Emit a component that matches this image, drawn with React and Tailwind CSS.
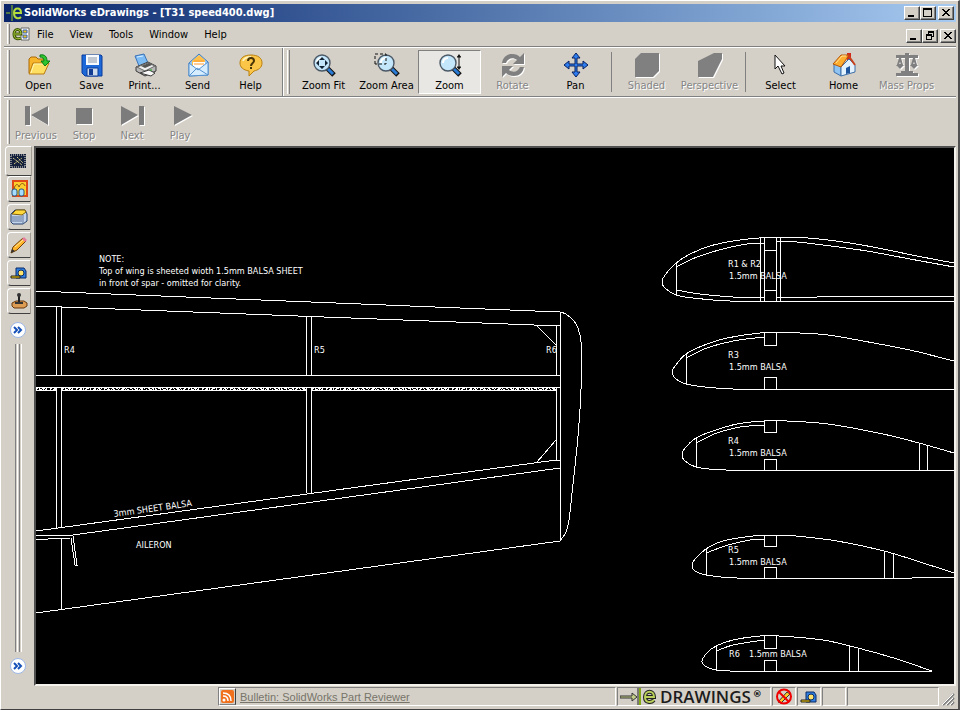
import clsx from 'clsx'

const MENUS = ['File', 'View', 'Tools', 'Window', 'Help']

/* ---------- Toolbar icons ---------- */

function OpenIcon() {
    return (
        <svg width="24" height="24" viewBox="0 0 24 24">
            <path d="M2 20V6l2-2h5l2 2h7v4" fill="#f7b52c" stroke="#a86a08" />
            <path d="M2 21 6 10h16l-5 11z" fill="#ffdf62" stroke="#b87a10" />
            <path d="M4 20 7 11h13" fill="none" stroke="#fff5b0" />
            <path d="M13 2c5-1 7 2 7 6h3l-5 5-4-5h3c0-3-2-4-4-4z" fill="#2fc52f" stroke="#0a7a14" />
        </svg>
    )
}

function SaveIcon() {
    return (
        <svg width="24" height="24" viewBox="0 0 24 24">
            <path d="M2 2h19l1 1v20H5l-3-3z" fill="#1d68d8" stroke="#0b3a9a" />
            <path d="M6 2h13v10H6z" fill="#f7fafd" />
            <path d="M8 5h9M8 7h9M8 9h9" stroke="#8a94a4" />
            <path d="M7 15h11v8H7z" fill="#cfdcec" stroke="#0b3a9a" />
            <path d="M9 16h4v6H9z" fill="#123c94" />
        </svg>
    )
}

function PrintIcon() {
    return (
        <svg width="24" height="24" viewBox="0 0 24 24">
            <path d="M2 3 11 1l4 9-9 3z" fill="#7dbbf5" stroke="#3a72b8" />
            <path d="m4 4 6-1" stroke="#d8efff" />
            <path d="m3 14 12-5 8 4v5l-11 5-9-5z" fill="#b8b8b8" stroke="#3c3c3c" />
            <path d="m4 14 8 4 10-5-7-3z" fill="#efefef" stroke="#6a6a6a" />
            <path d="m8 13 8-3 3 2-7 3z" fill="#555" />
            <path d="m7 20 11 3 4-3-6-3z" fill="#f8f8f8" stroke="#3c3c3c" />
            <path d="M17 17h2" stroke="#22b422" />
        </svg>
    )
}

function SendIcon() {
    return (
        <svg width="24" height="24" viewBox="0 0 24 24">
            <path d="M3 10 13 1l9 8v13L3 23z" fill="#9dc9f3" stroke="#3b7cc0" />
            <path d="m6 8 7-6 6 5v7l-7 3-6-3z" fill="#ffc04a" />
            <path d="M7 9h12v5l-6 3-6-3z" fill="#fff" />
            <path d="M8 8h10M8 11h10" stroke="#ff9a2c" />
            <path d="m3 10 9 7 10-8v13L3 23z" fill="#d6ecff" stroke="#5592d0" />
            <path d="m3 23 8-8 11 7" fill="none" stroke="#5592d0" />
        </svg>
    )
}

function HelpIcon() {
    return (
        <svg width="24" height="24" viewBox="0 0 24 24">
            <path d="M12 2c7 0 11 3 11 8s-4 7-8 8l-5 5v-5c-6-1-9-4-9-8 0-5 4-8 11-8z" fill="#fbc548" stroke="#b9800f" />
            <path d="M4 8c1-3 5-4 8-4" fill="none" stroke="#fff2bb" strokeWidth="2" />
            <path d="M9 8c0-4 6-4 6 0 0 2-3 2-3 5M12 14v2" fill="none" stroke="#493405" strokeWidth="2" />
        </svg>
    )
}

function Magnifier() {
    return (
        <>
            <path d="m15 15 7 7" stroke="#111" strokeWidth="5" />
            <path d="m16 16 5 5" stroke="#2a7bd6" strokeWidth="3" />
            <circle cx="10" cy="10" r="8" fill="#c3e6fb" stroke="#4b5866" strokeWidth="1.4" />
            <path d="M5 10c0-3 2-5 5-5" fill="none" stroke="#fff" strokeWidth="2" />
        </>
    )
}

function ZoomFitIcon() {
    return (
        <svg width="24" height="24" viewBox="0 0 24 24">
            <Magnifier />
            <path d="m10 4 3 3H7zM10 16l3-3H7zM4 10l3-3v6zM16 10l-3-3v6z" fill="#123" />
        </svg>
    )
}

function ZoomAreaIcon() {
    return (
        <svg width="26" height="24" viewBox="-2 0 26 24">
            <Magnifier />
            <path d="M-1 11V1h11v10z" fill="none" stroke="#111" strokeDasharray="3 2" />
        </svg>
    )
}

function ZoomIcon() {
    return (
        <svg width="24" height="24" viewBox="0 0 24 24">
            <Magnifier />
            <path d="M21 3v12M19 4h4M19 14h4" stroke="#111" />
            <path d="m21 1 2 3h-4zM21 17l2-3h-4z" fill="#111" />
        </svg>
    )
}

function RotateIcon() {
    return (
        <svg width="24" height="24" viewBox="0 0 24 24" className="drop-shadow-[1px_1px_0_white]">
            <path d="M1 10c1-6 5-9 10-9 4 0 6 1 8 3l4-4v11H12l4-4c-4-3-9-2-11 3zM23 14c-1 6-5 9-10 9-4 0-6-1-8-3l-4 4V13h11l-4 4c4 3 9 2 11-3z" fill="#808080" />
        </svg>
    )
}

function PanIcon() {
    return (
        <svg width="24" height="24" viewBox="0 0 24 24">
            <path
                d="m12 0 4 5h-3v6h6V8l5 4-5 4v-3h-6v6h3l-4 5-4-5h3v-6H5v3l-5-4 5-4v3h6V5H8z"
                fill="#2d7cf0"
                stroke="#08205e"
            />
        </svg>
    )
}

function ShadedIcon() {
    return (
        <svg width="26" height="25" viewBox="0 0 26 25" className="drop-shadow-[1px_1px_0_white]">
            <path d="M1 6 7 0h18v18l-6 6H1z" fill="#808080" />
        </svg>
    )
}

function PerspectiveIcon() {
    return (
        <svg width="26" height="25" viewBox="0 0 26 25" className="drop-shadow-[1px_1px_0_white]">
            <path d="M1 8 17 0h8v6l-9 18H1z" fill="#808080" />
        </svg>
    )
}

function SelectIcon() {
    return (
        <svg width="24" height="24" viewBox="0 0 24 24">
            <path d="M6 2v14l3-3 4 8 2-1-3-7h4z" fill="#fff" stroke="#111" />
        </svg>
    )
}

function HomeIcon() {
    return (
        <svg width="24" height="24" viewBox="0 0 24 24">
            <path d="M15 0h4v8h-4z" fill="#d42a1c" />
            <path d="M2 11v8l7 4V10z" fill="#8fc4f2" stroke="#3c6ea8" />
            <path d="m9 14 8-8 6 6v7L9 23z" fill="#e2f2ff" stroke="#3c6ea8" />
            <path d="m14 15 4-2v7l-4 1z" fill="#1e559c" />
            <path d="M1 11 9 2h8l-8 12z" fill="#ffad2e" stroke="#b3560c" />
            <path d="m4 10 6-7h4" fill="none" stroke="#ffe39a" />
            <path d="m16 2 7 10" stroke="#c8421c" strokeWidth="2" />
        </svg>
    )
}

function MassIcon() {
    return (
        <svg width="24" height="24" viewBox="0 0 24 24" className="drop-shadow-[1px_1px_0_white]">
            <path d="M1 2h22v3H1zM10 0h4v19h-4zM6 18h12v2H6zM1 20h22v3H1z" fill="#808080" />
            <path d="M5 5 3 12h4zM19 5l-2 7h4z" fill="none" stroke="#808080" strokeWidth="2" />
            <path d="M1 12h8l-4 4zM15 12h8l-4 4z" fill="#808080" />
        </svg>
    )
}

function PlayShape({ d }) {
    return (
        <svg width="24" height="20" viewBox="0 0 24 20" className="drop-shadow-[1px_1px_0_white]">
            <path d={d} fill="#7c7c7c" />
        </svg>
    )
}

const FILE_TOOLS = [
    { label: 'Open', icon: <OpenIcon /> },
    { label: 'Save', icon: <SaveIcon /> },
    { label: 'Print...', icon: <PrintIcon /> },
    { label: 'Send', icon: <SendIcon /> },
    { label: 'Help', icon: <HelpIcon /> },
]

const VIEW_TOOLS = [
    { label: 'Zoom Fit', icon: <ZoomFitIcon /> },
    { label: 'Zoom Area', icon: <ZoomAreaIcon /> },
    { label: 'Zoom', icon: <ZoomIcon />, pressed: true },
    { label: 'Rotate', icon: <RotateIcon />, disabled: true },
    { label: 'Pan', icon: <PanIcon /> },
    { separator: true },
    { label: 'Shaded', icon: <ShadedIcon />, disabled: true },
    { label: 'Perspective', icon: <PerspectiveIcon />, disabled: true },
    { separator: true },
    { label: 'Select', icon: <SelectIcon /> },
    { label: 'Home', icon: <HomeIcon /> },
    { label: 'Mass Props', icon: <MassIcon />, disabled: true },
]

const PLAY_TOOLS = [
    { label: 'Previous', icon: <PlayShape d="M1 0h5v19H1zM7 9 24 0v19z" /> },
    { label: 'Stop', icon: <PlayShape d="M4 2h16v16H4z" /> },
    { label: 'Next', icon: <PlayShape d="M1 0l17 9-17 10zM19 0h5v19h-5z" /> },
    { label: 'Play', icon: <PlayShape d="M6 0l18 9-18 10z" /> },
]

/* ---------- Window chrome ---------- */

function Grip() {
    return <div className="mr-0.5 w-[3px] shrink-0 self-stretch border-l border-white border-r border-r-[#808080]" />
}

function WindowButton({ label, d, className }) {
    return (
        <button
            type="button"
            aria-label={label}
            className={clsx(
                'flex h-[14px] w-4 items-center justify-center border border-t-white border-l-white border-r-[#404040] border-b-[#404040] bg-[#d4d0c8] shadow-[inset_-1px_-1px_0_#808080]',
                className
            )}
        >
            <svg width="12" height="10" viewBox="0 0 12 10" shapeRendering="crispEdges">
                <path d={d} fill="#000" />
            </svg>
        </button>
    )
}

const MINIMIZE = 'M2 7h6v2H2z'
const MAXIMIZE = 'M1 0h9v9H1zM2 2v6h7V2z'
const RESTORE = 'M4 0h6v6H8V5h1V2H5v1H4zM2 3h6v6H2zM3 5v3h4V5z'
const CLOSE = 'M2 1h2v1h1v1h2V2h1V1h2v1H9v1H8v1H7v1h1v1h1v1h1v1H8V7H7V6H5v1H4v1H2V7h1V6h1V5h1V4H4V3H3V2H2z'

function WindowButtons({ middle, middleLabel }) {
    return (
        <div className="flex">
            <WindowButton label="Minimize" d={MINIMIZE} />
            <WindowButton label={middleLabel} d={middle} />
            <WindowButton label="Close" d={CLOSE} className="ml-0.5" />
        </div>
    )
}

function ToolButton({ tool }) {
    return (
        <button
            type="button"
            disabled={tool.disabled}
            aria-pressed={tool.pressed}
            className={clsx(
                'flex h-11 w-full flex-col items-center border pt-0.5 leading-3 whitespace-nowrap',
                tool.pressed ? 'border-[#808080] border-r-white border-b-white bg-[#e9e7e3]' : 'border-transparent',
                tool.disabled && 'text-[#858585] [text-shadow:1px_1px_0_white]'
            )}
        >
            <span className="flex h-[27px] items-start justify-center">{tool.icon}</span>
            {tool.label}
        </button>
    )
}

function SideTab({ label, active, children }) {
    return (
        <button
            type="button"
            aria-label={label}
            className={clsx(
                'flex items-center justify-center rounded-l-sm border border-t-white border-l-white border-r-[#a09c94] border-b-[#404040]',
                active ? 'ml-px h-[30px] w-[27px]' : 'mb-0.5 ml-[3px] h-[26px] w-6'
            )}
        >
            <svg width="18" height="18" viewBox="0 0 18 18">{children}</svg>
        </button>
    )
}

function Chevron({ label }) {
    return (
        <button type="button" aria-label={label} className="mx-auto flex size-4 items-center justify-center rounded-full border border-[#9db8e8] bg-white">
            <svg width="12" height="12" viewBox="0 0 12 12" className="shrink-0">
                <path d="m2 3 3 3-3 3M6 3l3 3-3 3" fill="none" stroke="#1550b8" strokeWidth="2" />
            </svg>
        </button>
    )
}

function TapeIcon() {
    return (
        <>
            <path d="M6 4h8l2 3v7H6z" fill="#2f7fe0" stroke="#0b2a66" />
            <circle cx="11" cy="9" r="3" fill="#ffe26a" stroke="#0b2a66" />
            <path d="M1 12h9v2H1z" fill="#ffd100" stroke="#222" />
        </>
    )
}

function Sidebar() {
    return (
        <aside className="flex w-[30px] shrink-0 flex-col">
            <SideTab label="Sheets" active>
                <path d="M0 2h16v14H0z" fill="#15203c" />
                <path d="M1 3h14v12H1z" fill="none" stroke="#e8e8d8" strokeDasharray="1 1" />
                <path d="m3 6 9 7M4 12l8-6M7 5l6 6" stroke="#d8d088" strokeDasharray="2 1" />
            </SideTab>
            <SideTab label="Preview">
                <path d="M3 1h14v15H3z" fill="#ffcf2e" stroke="#e04a18" strokeWidth="2" />
                <path d="M4 9c1-5 4-6 5-2 2-5 5-4 6-1" fill="none" stroke="#8c5a10" />
                <rect x="2" y="9" width="5" height="7" rx="2" fill="#a5dcff" stroke="#28547c" />
                <rect x="9" y="9" width="5" height="7" rx="2" fill="#a5dcff" stroke="#28547c" />
            </SideTab>
            <SideTab label="Layers">
                <path d="m1 6 4-4h10l2 4v7l-4 3H3l-2-2z" fill="#c4d4ea" stroke="#27406c" />
                <path d="m2 6 4-4h9l1 2-4 3z" fill="#ffd83c" stroke="#806008" />
                <path d="M2 9h10M2 11h10M2 13h10M13 7v9" stroke="#61789c" />
            </SideTab>
            <SideTab label="Markup">
                <path d="m1 17 2-6L13 2l3 3-9 9z" fill="#ffb429" stroke="#704008" />
                <path d="m12 3 2-2 3 3-2 2z" fill="#e67c9c" />
                <path d="m5 11 8-7" stroke="#ffe89a" />
                <path d="m1 17 1-4 3 2z" fill="#333" />
            </SideTab>
            <SideTab label="Measure">
                <TapeIcon />
            </SideTab>
            <SideTab label="Stamp">
                <path d="m2 11 4-2h8l3 2v3l-3 2H4l-2-2z" fill="#dc9c54" stroke="#68390c" />
                <path d="M9 4v7" stroke="#222" strokeWidth="2" />
                <circle cx="9" cy="3" r="2" fill="#333" />
                <path d="M5 11h8" stroke="#333" strokeWidth="2" />
            </SideTab>
            <div className="mt-1.5 flex min-h-0 flex-1 flex-col pr-0.5">
                <Chevron label="Expand top pane" />
                <div className="mx-auto my-1.5 flex min-h-0 flex-1 gap-px">
                    <div className="w-[3px] border-r border-l border-r-white border-l-[#808080]" />
                    <div className="w-[3px] border-r border-l border-r-white border-l-[#808080]" />
                </div>
                <Chevron label="Expand bottom pane" />
                <div className="h-3" />
            </div>
        </aside>
    )
}

/* ---------- Drawing ---------- */

// Smooth curve through the points. Handles are a third of each segment long,
// so a short segment next to a long one doesn't overshoot.
function spline(points) {
    const tangent = i => {
        const a = points[Math.max(i - 1, 0)]
        const b = points[Math.min(i + 1, points.length - 1)]
        const length = Math.hypot(b[0] - a[0], b[1] - a[1])
        return [(b[0] - a[0]) / length, (b[1] - a[1]) / length]
    }
    let d = `M${points[0][0]} ${points[0][1]}`
    for (let i = 0; i < points.length - 1; i++) {
        const [x1, y1] = points[i]
        const [x2, y2] = points[i + 1]
        const [tx1, ty1] = tangent(i)
        const [tx2, ty2] = tangent(i + 1)
        const handle = Math.min(Math.hypot(x2 - x1, y2 - y1) / 3, 12)
        d += `C${x1 + tx1 * handle} ${y1 + ty1 * handle} ${x2 - tx2 * handle} ${y2 - ty2 * handle} ${x2} ${y2}`
    }
    return d
}

const RIBS = [
    {
        outline: [[954, 301], [730, 301], [693, 298], [676, 295], [665, 288], [662, 282], [665, 275], [676, 263], [690, 254], [710, 246], [733, 241], [759, 238], [783, 238], [808, 238], [850, 243], [883, 249], [917, 256], [954, 263]],
        inner: [
            [[676, 267], [697, 257], [723, 249], [747, 244], [764, 243]],
            [[776, 242], [797, 242], [823, 245], [867, 251], [910, 259], [954, 267]],
            [[676, 290], [700, 294], [733, 297], [764, 298]],
            [[776, 298], [817, 297], [954, 297]],
        ],
        lines: 'M676 263V295M760 238V301M764 238V301M776 238V301M780 238V301M764 250H776M764 290H776',
        labels: [['R1 & R2', 728, 267], ['1.5mm BALSA', 729, 279]],
    },
    {
        outline: [[954, 389], [733, 389], [705, 387], [686, 384], [676, 379], [672, 372], [675, 366], [686, 354], [707, 344], [727, 338], [760, 333], [780, 333], [800, 333], [828, 335], [863, 341], [910, 350], [954, 361]],
        inner: [[[686, 358], [707, 348], [733, 341], [764, 337]]],
        lines: 'M686 354V384M764 333V345H776V333M764 389V377H776V389',
        labels: [['R3', 728, 358], ['1.5mm BALSA', 729, 370]],
    },
    {
        outline: [[954, 470], [726, 470], [696, 467], [685, 461], [682, 455], [685, 448], [696, 438], [713, 431], [737, 424], [764, 421], [787, 421], [828, 424], [883, 434], [919, 443], [954, 453]],
        inner: [[[696, 443], [717, 433], [740, 427], [764, 425]]],
        lines: 'M696 438V467M764 421V432H776V421M764 470V459H776V470M919 443V470M927 445V470',
        labels: [['R4', 728, 444], ['1.5mm BALSA', 729, 456]],
    },
    {
        outline: [[954, 577], [912, 578], [737, 578], [706, 575], [695, 571], [692, 565], [695, 559], [706, 549], [723, 541], [753, 536], [775, 535], [796, 536], [837, 541], [884, 551], [917, 561], [954, 573]],
        inner: [[[706, 553], [728, 545], [750, 540], [764, 539]]],
        lines: 'M706 549V575M764 535V546H776V535M764 578V567H776V578M884 551V578M893 554V578',
        labels: [['R5', 728, 553], ['1.5mm BALSA', 729, 565]],
    },
    {
        outline: [[932, 671], [730, 671], [716, 670], [705, 666], [702, 661], [707, 653], [716, 646], [733, 640], [760, 636], [779, 636], [823, 640], [858, 648], [897, 659], [932, 671]],
        inner: [[[716, 651], [733, 645], [764, 640]]],
        lines: 'M716 646V670M764 636V648H776V636M764 671V660H776V671M849 646V671M858 648V671',
        labels: [['R6', 729, 657], ['1.5mm BALSA', 749, 657]],
    },
]

const WING_TIP = [[560, 312], [566, 314], [574, 321], [578, 328], [581, 342], [581, 390], [579, 423], [577, 447], [572, 493], [569, 520], [566, 532], [560, 541]]

function Rib({ rib }) {
    return (
        <g>
            <path d={spline(rib.outline)} />
            {rib.inner.map((points, i) => (
                <path key={i} d={spline(points)} />
            ))}
            <path d={rib.lines} />
            {rib.labels.map(([text, x, y]) => (
                <text key={text} x={x} y={y} fill="#fff" stroke="none">{text}</text>
            ))}
        </g>
    )
}

function Drawing() {
    return (
        <svg
            className="block h-full w-full font-['DejaVu_Sans_Condensed','DejaVu_Sans',sans-serif] text-[9px]"
            role="img"
            aria-label="T31 speed400 wing"
        >
            <g transform="translate(-36 -148)" fill="none" stroke="#fff" shapeRendering="crispEdges">
                {/* Wing panel */}
                <path d="M36 291 560 312M36 306 560 326M36 375H560M36 387H560M36 390H56M61 390H306M311 390H556" />
                <path d="M56 306V375M61 306V375M56 387V528M61 387V528M306 316V375M311 316V375M306 387V493M311 387V493" />
                <path d="M556 326V375M556 387V460H560M560 312V541M537 326 556 345M537 462 556 440" />
                <path d="M36 531 556 460M73 535 560 468M36 613 560 541M61 538V610" />
                <path d="M36 535H73M36 540 60 538H70M71 538 75 565H77L73 536" />
                <path d={spline(WING_TIP)} />
                {/* Spar webbing */}
                <path d="M36 388H56M62 388H306M312 388H556" strokeDasharray="2 1 1 2 3 1 1 3 2 2" />
                <path d="M36 389H56M62 389H306M312 389H556" strokeDasharray="1 2 3 1 1 1 2 3" />

                {RIBS.map((rib, i) => (
                    <Rib key={i} rib={rib} />
                ))}

                <g fill="#fff" stroke="none">
                    <text x="99" y="262">NOTE:</text>
                    <text x="99" y="274">Top of wing is sheeted wioth 1.5mm BALSA SHEET</text>
                    <text x="99" y="286">in front of spar - omitted for clarity.</text>
                    <text x="64" y="353">R4</text>
                    <text x="314" y="353">R5</text>
                    <text x="546" y="353">R6</text>
                    <text x="136" y="548">AILERON</text>
                    <text x="114" y="517" transform="rotate(-8 114 517)">3mm SHEET BALSA</text>
                </g>
            </g>
        </svg>
    )
}

function StatusPanel({ className, children }) {
    return (
        <div className={clsx('flex h-[19px] items-center border border-t-[#808080] border-l-[#808080] border-r-white border-b-white', className)}>
            {children}
        </div>
    )
}

function StatusBar() {
    return (
        <footer className="flex h-[23px] shrink-0 items-start gap-px pt-px pl-[214px]">
            <StatusPanel className="min-w-0 flex-1 overflow-hidden">
                <button type="button" aria-label="News feed" className="mr-1 border border-t-white border-l-white border-r-[#404040] border-b-[#808080] p-px">
                    <svg width="13" height="13" viewBox="0 0 13 13">
                        <rect width="13" height="13" rx="2" fill="#f0701c" />
                        <circle cx="3" cy="10" r="1.5" fill="#fff" />
                        <path d="M2 6c3 0 5 2 5 5M2 3c5 0 8 3 8 8" fill="none" stroke="#fff" strokeWidth="1.5" />
                    </svg>
                </button>
                <a href="#bulletin" className="truncate font-['Liberation_Sans',sans-serif] text-[11px] leading-4 text-[#77746a] underline">
                    Bulletin: SolidWorks Part Reviewer
                </a>
            </StatusPanel>
            <StatusPanel className="w-[154px] gap-0.5 pl-0.5">
                <svg width="38" height="17" viewBox="0 0 38 17" className="shrink-0">
                    <path d="M0 8h12V5l5 4-5 4v-3H0z" fill="#c5cf8a" stroke="#333" />
                    <path d="M20 0v17" stroke="#82a813" strokeWidth="2" />
                    <path d="M18 0v17" stroke="#222" />
                    <path d="M26 9h8c0-7-9-7-9 0 0 6 6 6 9 3" fill="none" stroke="#222" strokeWidth="4" />
                    <path d="M26 9h8c0-7-9-7-9 0 0 6 6 6 9 3" fill="none" stroke="#b9cf5a" strokeWidth="2" />
                </svg>
                <span className="font-['Open_Sans',sans-serif] text-[17px] leading-4 font-semibold text-[#1c1c1c]">DRAWINGS</span>
                <span className="self-start font-['DejaVu_Sans',sans-serif] text-[9px] leading-3 font-bold">®</span>
            </StatusPanel>
            <StatusPanel className="w-6 justify-center">
                <svg width="18" height="17" viewBox="0 0 18 17">
                    <path d="m3 14 9-10 3 2-9 9z" fill="#ffc928" stroke="#333" />
                    <circle cx="9" cy="8.5" r="7" fill="none" stroke="#f00000" strokeWidth="2" />
                    <path d="m4 4 10 10" stroke="#f00000" strokeWidth="2" />
                </svg>
            </StatusPanel>
            <StatusPanel className="w-6 justify-center">
                <svg width="18" height="17" viewBox="0 0 18 17"><TapeIcon /></svg>
            </StatusPanel>
            <StatusPanel className="w-6" />
            <StatusPanel className="w-[92px]" />
            <svg width="16" height="19" viewBox="0 0 16 19" className="shrink-0">
                <path d="M3 18 14 7M7 18l7-7M11 18l3-3" stroke="#808080" strokeWidth="2" />
                <path d="M2 18 13 7M6 18l7-7M10 18l3-3" stroke="#fff" />
            </svg>
        </footer>
    )
}

export default function App() {
    return (
        <div className="flex h-screen flex-col overflow-hidden border-t border-r-2 border-b border-l border-t-white border-r-[#505050] border-b-[#404040] border-l-white bg-[#d4d0c8] pt-[3px] pr-0.5 pl-[3px] font-['DejaVu_Sans_Condensed','DejaVu_Sans',sans-serif] text-[11px] text-black">
            {/* Title bar */}
            <header className="flex h-[18px] shrink-0 items-center bg-linear-to-r from-[#0a246a] to-[#a6caf0] pr-0.5 pl-0.5">
                <svg width="17" height="16" viewBox="0 0 17 16" className="mr-px shrink-0">
                    <path d="M0 8h4M6 0v16" stroke="#9ccc24" />
                    <path d="M9 8h6c0-6-7-6-7 0 0 6 5 6 7 4" fill="none" stroke="#b4dc3c" strokeWidth="2" />
                </svg>
                <h1 className="min-w-0 flex-1 truncate font-bold text-white">SolidWorks eDrawings - [T31 speed400.dwg]</h1>
                <WindowButtons middle={MAXIMIZE} middleLabel="Maximize" />
            </header>

            {/* Menu bar */}
            <nav className="flex h-[25px] shrink-0 items-center border-b border-[#808080] pl-[3px]">
                <div className="flex h-5"><Grip /></div>
                <svg width="18" height="16" viewBox="0 0 18 16">
                    <path d="M9 2h8v12H9z" fill="#fff" stroke="#666" />
                    <path d="M11 4h4v3h-4zM11 9h4v3h-4z" fill="#eac020" stroke="#3560b0" />
                    <path d="M3 8h6c0-6-7-6-7 0 0 6 5 5 7 4" fill="none" stroke="#3c5608" strokeWidth="3" />
                    <path d="M3 8h6c0-6-7-6-7 0 0 6 5 5 7 4" fill="none" stroke="#a8cc38" />
                </svg>
                <div className="flex gap-0.5">
                    {MENUS.map(menu => (
                        <button key={menu} type="button" className="px-[7px] pt-0.5 leading-4">{menu}</button>
                    ))}
                </div>
                <div className="ml-auto pt-1">
                    <WindowButtons middle={RESTORE} middleLabel="Restore" />
                </div>
            </nav>

            {/* Main toolbar */}
            <div className="flex h-[50px] shrink-0 border-t border-b border-t-white border-b-[#808080]">
                <div className="flex border-r border-[#808080] py-0.5 pr-[5px] pl-[3px]">
                    <Grip />
                    {FILE_TOOLS.map(tool => (
                        <div key={tool.label} className="w-[53px]">
                            <ToolButton tool={tool} />
                        </div>
                    ))}
                </div>
                <div className="flex border-l border-white py-0.5 pl-[3px]">
                    <Grip />
                    {VIEW_TOOLS.map((tool, i) =>
                        tool.separator ? (
                            <div key={i} className="mr-[3px] ml-1 h-10 w-px self-center bg-[#808080]" />
                        ) : (
                            <div key={tool.label} className="w-[63px]">
                                <ToolButton tool={tool} />
                            </div>
                        )
                    )}
                </div>
            </div>

            {/* Playback toolbar */}
            <div className="flex h-[49px] shrink-0 border-t border-white py-0.5 pl-[3px]">
                <Grip />
                {PLAY_TOOLS.map(tool => (
                    <button
                        key={tool.label}
                        type="button"
                        disabled
                        className="flex w-12 flex-col items-center pt-1.5 leading-3 text-[#858585] [text-shadow:1px_1px_0_white]"
                    >
                        <span className="h-6">{tool.icon}</span>
                        {tool.label}
                    </button>
                ))}
            </div>

            <div className="flex min-h-0 flex-1">
                <Sidebar />
                <main className="min-w-0 flex-1 overflow-hidden border-2 border-t-[#505050] border-r-[#f4f2ec] border-b-[#f4f2ec] border-l-[#505050] bg-black">
                    <Drawing />
                </main>
            </div>

            <StatusBar />
        </div>
    )
}
